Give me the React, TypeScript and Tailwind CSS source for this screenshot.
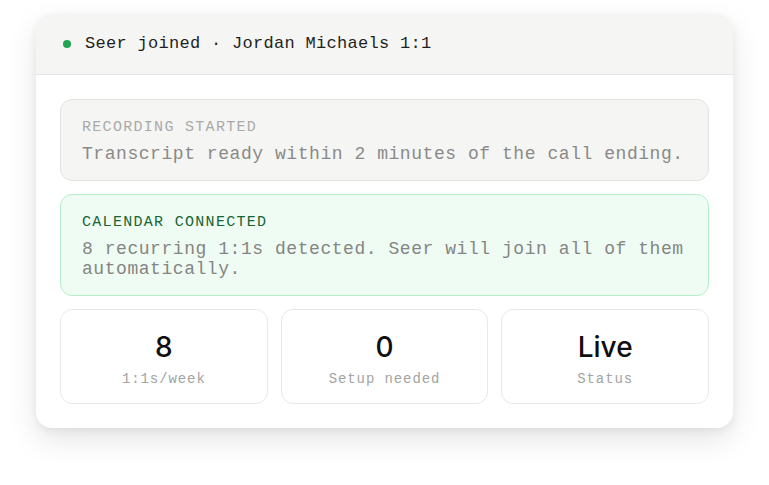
import React from "react";

const mono = "font-['Liberation_Mono',monospace]";

function Stat({ value, label }: { value: string; label: string }) {
  return (
    <div className="flex flex-col items-center rounded-[12px] border border-[#e8e8e7] bg-white pt-[21px] pb-[14px]">
      <div className="font-['Inter',sans-serif] text-[28px] leading-[32px] font-medium text-[#0f0f0f]">
        {value}
      </div>
      <div className={`${mono} mt-[6px] text-[14px] leading-[20px] tracking-[0.9px] text-[#a3a3a3]`}>
        {label}
      </div>
    </div>
  );
}

export default function App() {
  return (
    <div className="min-h-[485px] bg-white pt-[14px]">
      <div className="mx-auto w-[697px] overflow-hidden rounded-[16px] bg-white shadow-[0_12px_30px_rgba(0,0,0,0.1),0_3px_8px_rgba(0,0,0,0.06)]">
        <div className="flex h-[61px] items-center gap-[14px] border-b border-[#e6e6e4] bg-[#f5f5f4] pl-[27px]">
          <span className="h-[8px] w-[8px] rounded-full bg-[#22a356]" />
          <span className={`${mono} text-[17px] tracking-[0.3px] text-[#1f1f1f]`}>
            Seer joined · Jordan Michaels 1:1
          </span>
        </div>

        <div className="flex flex-col gap-[13px] p-[24px]">
          <div className="rounded-[12px] border border-[#e2e2e0] bg-[#f5f5f4] px-[21px] pt-[18px] pb-[16px]">
            <div className={`${mono} text-[15px] leading-[20px] tracking-[1.3px] text-[#aaaaa8]`}>
              RECORDING STARTED
            </div>
            <div className={`${mono} mt-[6px] text-[18px] leading-[20px] tracking-[0.55px] text-[#8a8a88]`}>
              Transcript ready within 2 minutes of the call ending.
            </div>
          </div>

          <div className="rounded-[12px] border border-[#b5eec8] bg-[#effcf3] px-[21px] pt-[18px] pb-[16px]">
            <div className={`${mono} text-[15px] leading-[20px] tracking-[1.3px] text-[#166534]`}>
              CALENDAR CONNECTED
            </div>
            <div className={`${mono} mt-[6px] text-[18px] leading-[20px] tracking-[0.55px] text-[#858583]`}>
              8 recurring 1:1s detected. Seer will join all of them automatically.
            </div>
          </div>

          <div className="grid grid-cols-3 gap-[13px]">
            <Stat value="8" label="1:1s/week" />
            <Stat value="0" label="Setup needed" />
            <Stat value="Live" label="Status" />
          </div>
        </div>
      </div>
    </div>
  );
}
